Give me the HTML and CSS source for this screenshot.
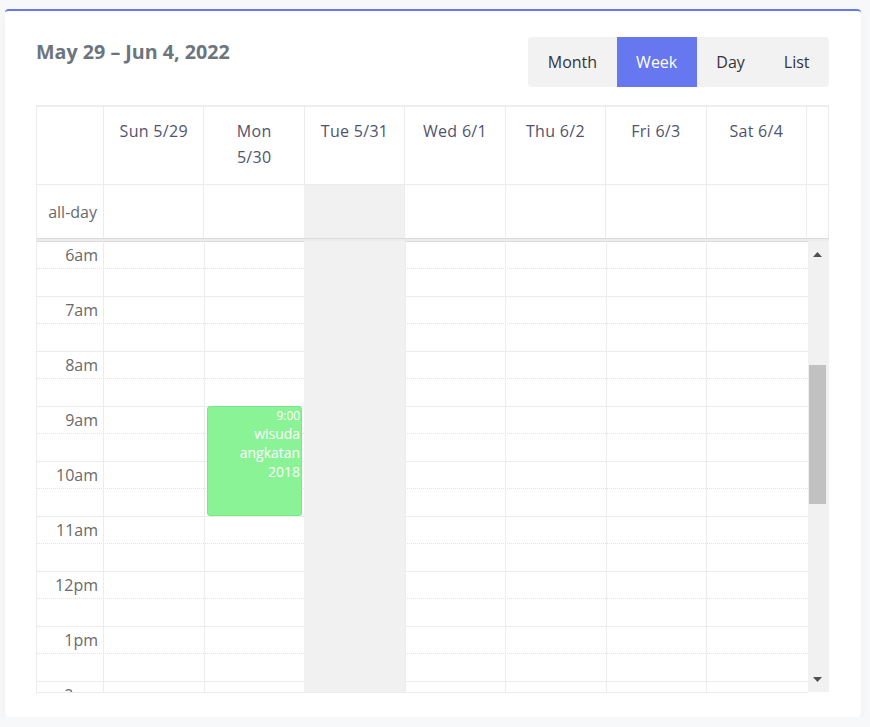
FILE: index.html
```html
<!DOCTYPE html>
<html lang="en">
<head>
<meta charset="utf-8">
<title>Calendar</title>
<link rel="stylesheet" href="styles.css">
</head>
<body>
<div class="card">
  <div class="toolbar">
    <h2 class="title">May 29 – Jun 4, 2022</h2>
    <div class="views">
      <button class="view">Month</button>
      <button class="view active">Week</button>
      <button class="view">Day</button>
      <button class="view">List</button>
    </div>
  </div>
  <div class="cal">
    <div class="row head">
      <div class="cell axis"></div>
      <div class="cell day">Sun 5/29</div>
      <div class="cell day">Mon<br>5/30</div>
      <div class="cell day">Tue 5/31</div>
      <div class="cell day">Wed 6/1</div>
      <div class="cell day">Thu 6/2</div>
      <div class="cell day">Fri 6/3</div>
      <div class="cell day">Sat 6/4</div>
      <div class="cell gutter"></div>
    </div>
    <div class="row allday">
      <div class="cell axis label">all-day</div>
      <div class="cell"></div>
      <div class="cell"></div>
      <div class="cell today"></div>
      <div class="cell"></div>
      <div class="cell"></div>
      <div class="cell"></div>
      <div class="cell"></div>
      <div class="cell gutter"></div>
    </div>
    <div class="divider"></div>
    <div class="body">
      <div class="grid">
        <div class="slat major"><span class="time">6am</span></div>
        <div class="slat minor"></div>
        <div class="slat major"><span class="time">7am</span></div>
        <div class="slat minor"></div>
        <div class="slat major"><span class="time">8am</span></div>
        <div class="slat minor"></div>
        <div class="slat major"><span class="time">9am</span></div>
        <div class="slat minor"></div>
        <div class="slat major"><span class="time">10am</span></div>
        <div class="slat minor"></div>
        <div class="slat major"><span class="time">11am</span></div>
        <div class="slat minor"></div>
        <div class="slat major"><span class="time">12pm</span></div>
        <div class="slat minor"></div>
        <div class="slat major"><span class="time">1pm</span></div>
        <div class="slat minor"></div>
        <div class="slat major"><span class="time">2pm</span></div>
        <div class="slat minor"></div>

        <div class="col c1"></div>
        <div class="col c2"></div>
        <div class="col c3"></div>
        <div class="col c4 today"></div>
        <div class="col c5"></div>
        <div class="col c6"></div>
        <div class="col c7"></div>
        <div class="col c8"></div>

        <div class="event">
          <div class="ev-time">9:00</div>
          <div class="ev-title">wisuda angkatan 2018</div>
        </div>
      </div>
      <div class="scrollbar">
        <div class="sb-btn"><svg width="9" height="5" viewBox="0 0 9 5"><polygon points="0,5 9,5 4.5,0" fill="#505050"/></svg></div>
        <div class="sb-thumb"></div>
        <div class="sb-fill"></div>
        <div class="sb-btn"><svg width="9" height="5" viewBox="0 0 9 5"><polygon points="0,0 9,0 4.5,5" fill="#505050"/></svg></div>
      </div>
    </div>
  </div>
</div>
</body>
</html>
```

FILE: styles.css
```css
* { box-sizing: border-box; }

html, body {
  margin: 0;
  padding: 0;
}

body {
  background: #f7f8f9;
  font-family: "Open Sans", "Noto Sans", sans-serif;
  color: #333;
}

.card {
  width: 856px;
  height: 708px;
  margin: 9px 0 0 5px;
  background: #fff;
  border-top: 2px solid #6777ef;
  border-radius: 4px;
  box-shadow: 0 4px 8px rgba(0, 0, 0, 0.04);
  padding: 26px 32px 24px 31px;
}

.toolbar {
  display: flex;
  justify-content: space-between;
  align-items: flex-start;
  height: 50px;
  margin-bottom: 18px;
}

.title {
  margin: 0;
  font-size: 19.7px;
  line-height: 30px;
  font-weight: 700;
  color: #6c757d;
}

.views {
  display: flex;
  height: 50px;
  background: #f2f2f2;
  border-radius: 4px;
  overflow: hidden;
}

.view {
  border: 0;
  background: transparent;
  font-family: inherit;
  font-size: 16px;
  color: #34343a;
  padding: 0 19.5px;
  height: 50px;
  cursor: pointer;
}

.view.active {
  background: #6777ef;
  color: #fff;
}

.cal {
  width: 793px;
  border-left: 1px solid #ececec;
}

.row {
  display: grid;
  grid-template-columns: 67px repeat(7, 1fr) 21px;
}

.head {
  height: 79px;
  border-top: 2px solid #eeeeee;
  border-right: 1px solid #ececec;
}

.allday {
  height: 54px;
  border-top: 1px solid #ececec;
  border-right: 1px solid #ececec;
}

.cell {
  border-right: 1px solid #ececec;
}

.cell.gutter {
  border-right: 0;
}

.head .day {
  text-align: center;
  font-size: 16px;
  letter-spacing: 0.3px;
  line-height: 26px;
  padding-top: 11px;
  color: #4f536e;
}

.label {
  display: flex;
  align-items: center;
  justify-content: flex-end;
  padding-right: 6px;
  font-size: 16px;
  color: #6a6a6a;
}

.allday .today {
  background: #f1f1f1;
  margin-left: -1px;
}

.divider {
  height: 3px;
  border-top: 1px solid #dcdcdc;
  background: #ececec;
}

.body {
  display: flex;
  height: 452px;
}

.grid {
  flex: 1;
  height: 452px;
  overflow: hidden;
  display: grid;
  grid-template-columns: 67px repeat(7, 1fr);
  grid-template-rows: repeat(9, 27px 28px);
  border-bottom: 1px solid #ececec;
}

.slat {
  grid-column: 1 / -1;
  display: flex;
}

.slat.major {
  border-top: 1px solid #ececec;
}

.slat.major:first-child {
  border-top-color: #dcdcdc;
}

.slat.minor {
  border-top: 1px dotted #e2e2e2;
}

.slat:nth-child(1)  { grid-row: 1; }
.slat:nth-child(2)  { grid-row: 2; }
.slat:nth-child(3)  { grid-row: 3; }
.slat:nth-child(4)  { grid-row: 4; }
.slat:nth-child(5)  { grid-row: 5; }
.slat:nth-child(6)  { grid-row: 6; }
.slat:nth-child(7)  { grid-row: 7; }
.slat:nth-child(8)  { grid-row: 8; }
.slat:nth-child(9)  { grid-row: 9; }
.slat:nth-child(10) { grid-row: 10; }
.slat:nth-child(11) { grid-row: 11; }
.slat:nth-child(12) { grid-row: 12; }
.slat:nth-child(13) { grid-row: 13; }
.slat:nth-child(14) { grid-row: 14; }
.slat:nth-child(15) { grid-row: 15; }
.slat:nth-child(16) { grid-row: 16; }
.slat:nth-child(17) { grid-row: 17; }
.slat:nth-child(18) { grid-row: 18; }

.time {
  width: 67px;
  display: flex;
  align-items: center;
  justify-content: flex-end;
  padding-right: 6px;
  font-size: 16px;
  color: #6a6a6a;
}

.col {
  grid-row: 1 / -1;
  border-right: 1px solid #ececec;
}

.c1 { grid-column: 1; }
.c2 { grid-column: 2; }
.c3 { grid-column: 3; }
.c4 { grid-column: 4; }
.c5 { grid-column: 5; }
.c6 { grid-column: 6; }
.c7 { grid-column: 7; }
.c8 { grid-column: 8; border-right: 0; }

.col.today {
  background: #f1f1f1;
  margin-left: -1px;
}

.event {
  grid-column: 3;
  grid-row: 7 / 11;
  margin: 0 3px 0 2.5px;
  background: #89f396;
  border: 1px solid #79e887;
  border-radius: 3px;
  color: #fff;
  text-align: right;
  padding: 0 1px 0 4px;
  z-index: 1;
}

.ev-time {
  font-size: 12px;
  line-height: 17px;
}

.ev-title {
  font-size: 14px;
  line-height: 19px;
}

.scrollbar {
  width: 21px;
  height: 451px;
  background: #f1f1f1;
  display: flex;
  flex-direction: column;
  padding-left: 1px;
  padding-right: 3px;
}

.sb-btn {
  height: 26px;
  display: flex;
  align-items: center;
  justify-content: center;
}

.sb-btn svg {
  display: block;
}

.sb-thumb {
  margin-top: 98px;
  height: 139px;
  background: #c1c1c1;
}

.sb-fill {
  flex: 1;
}
```
